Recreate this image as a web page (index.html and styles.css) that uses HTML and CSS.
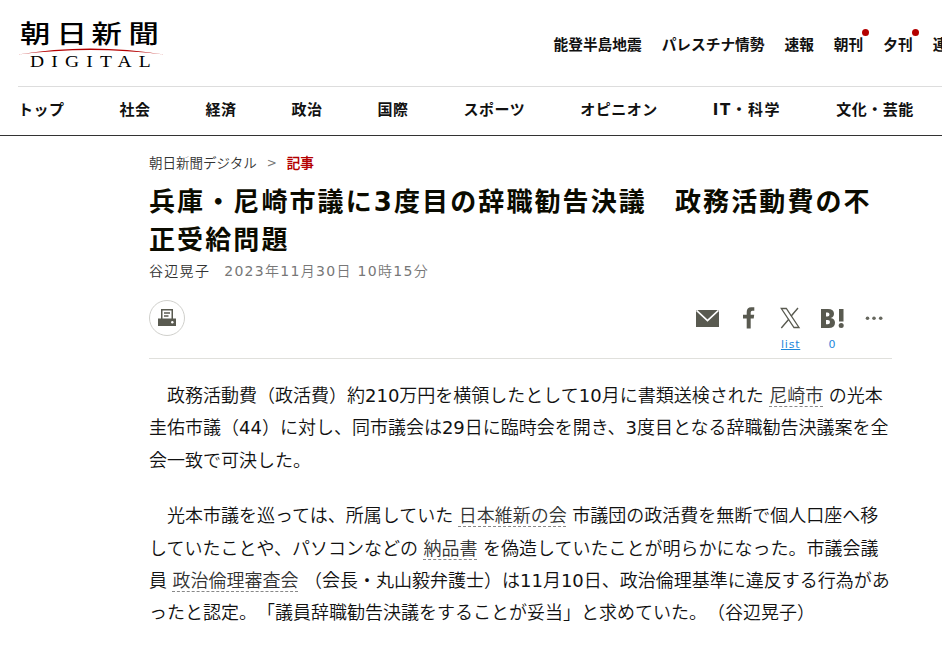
FILE: index.html
```html
<!DOCTYPE html>
<html lang="ja">
<head>
    <meta charset="UTF-8">
    <meta name="viewport" content="width=device-width, initial-scale=1.0">
    <title>兵庫・尼崎市議に3度目の辞職勧告決議　政務活動費の不正受給問題:朝日新聞デジタル</title>
    <link rel="stylesheet" href="styles.css">
</head>
<body>
    <header class="header">
        <div class="header-top">
            <a href="#" class="logo">
                <svg width="146" height="50" viewBox="0 0 146 50">
                    <g class="logo-name">
                        <text transform="translate(2 24) scale(1.24 1)">朝</text>
                        <text transform="translate(38.5 24) scale(1.24 1)">日</text>
                        <text transform="translate(73.5 24) scale(1.24 1)">新</text>
                        <text transform="translate(110.5 24) scale(1.24 1)">聞</text>
                    </g>
                    <path d="M0 35.5Q72 23.5 146 35.5Q72 26.5 0 35.5z" fill="#b40000"/>
                    <text class="logo-sub" transform="translate(12 48) scale(1.15 1)" textLength="105">DIGITAL</text>
                </svg>
            </a>
            <ul class="topics">
                <li><a href="#">能登半島地震</a></li>
                <li><a href="#">パレスチナ情勢</a></li>
                <li><a href="#">速報</a></li>
                <li class="new"><a href="#">朝刊</a></li>
                <li class="new"><a href="#">夕刊</a></li>
                <li><a href="#">連載</a></li>
            </ul>
        </div>
        <nav class="nav">
            <a href="#">トップ</a>
            <a href="#">社会</a>
            <a href="#">経済</a>
            <a href="#">政治</a>
            <a href="#">国際</a>
            <a href="#">スポーツ</a>
            <a href="#">オピニオン</a>
            <a href="#" class="wide">IT・科学</a>
            <a href="#">文化・芸能</a>
        </nav>
    </header>

    <main class="article">
        <div class="breadcrumb">
            <a href="#">朝日新聞デジタル</a>
            <span class="arrow">&gt;</span>
            <span class="current">記事</span>
        </div>
        <h1>兵庫・尼崎市議に3度目の辞職勧告決議　政務活動費の不正受給問題</h1>
        <p class="byline"><span class="author">谷辺晃子</span><time>2023年11月30日 10時15分</time></p>

        <div class="tools">
            <a href="#" class="print" aria-label="印刷">
                <svg width="18" height="18" viewBox="0 0 18 18">
                    <path d="M3 0h12v10H3z" fill="#595a50"/>
                    <path d="M4.5 1.5h9V10h-9z" fill="#fff"/>
                    <path d="M6 4h6M6 7h4.5" stroke="#595a50" stroke-width="1.3"/>
                    <path d="M0 9.5h18V17H0z" fill="#595a50"/>
                    <circle cx="14.3" cy="13.2" r="1.2" fill="#fff"/>
                </svg>
            </a>
            <ul class="share">
                <li>
                    <svg width="24" height="24" viewBox="0 0 24 24">
                        <path d="M1 4h23v17H1z" fill="#595a50"/>
                        <path d="M1.5 4.3L12.500 14.500 23.500 4.300" fill="none" stroke="#fff" stroke-width="1.7"/>
                    </svg>
                </li>
                <li>
                    <svg width="24" height="24" viewBox="0 0 24 24">
                        <path d="M9.7 22.500V12.500H6V8.800H9.700V6Q9.700 1.200 14.200 1.200H17.300V4.700H15.300Q13.700 4.700 13.700 6.500V8.800H17.200L16.700 12.500H13.700V22.500z" fill="#595a50"/>
                    </svg>
                </li>
                <li>
                    <svg width="24" height="24" viewBox="0 0 24 24">
                        <path d="M2.3 2.500H7.300L20 21.500H15z" fill="#fff" stroke="#595a50" stroke-width="1.3"/>
                        <path d="M19 2L12 10.300M9.800 13.300L2.300 22" fill="none" stroke="#595a50" stroke-width="1.4"/>
                    </svg>
                    <a href="#" class="list">list</a>
                </li>
                <li>
                    <svg width="24" height="24" viewBox="0 0 24 24">
                        <path fill-rule="evenodd" d="M1 3H8Q14 3 14 7.700Q14 11.200 10.500 12Q15 12.700 15 16.800Q15 22 8.500 22H1zM6 6.600V10.400H7.500Q9.500 10.400 9.500 8.500Q9.500 6.600 7.500 6.600zM6 14V18.300H7.800Q10 18.300 10 16.100Q10 14 7.800 14zM19 3H23.500V15.500H19z" fill="#595a50"/>
                        <circle cx="21.2" cy="19.500" r="2.500" fill="#595a50"/>
                    </svg>
                    <span class="count">0</span>
                </li>
                <li>
                    <svg width="24" height="24" viewBox="0 0 24 24" fill="#66675e">
                        <circle cx="5.5" cy="12.300" r="1.800"/>
                        <circle cx="12" cy="12.300" r="1.800"/>
                        <circle cx="18.7" cy="12.300" r="1.800"/>
                    </svg>
                </li>
            </ul>
        </div>

        <div class="text">
            <p>　政務活動費（政活費）約210万円を横領したとして10月に書類送検された<a href="#">尼崎市</a>の光本圭佑市議（44）に対し、同市議会は29日に臨時会を開き、3度目となる辞職勧告決議案を全会一致で可決した。</p>
            <p>　光本市議を巡っては、所属していた<a href="#">日本維新の会</a>市議団の政活費を無断で個人口座へ移していたことや、パソコンなどの<a href="#">納品書</a>を偽造していたことが明らかになった。市議会議員<a href="#">政治倫理審査会</a>（会長・丸山毅弁護士）は11月10日、政治倫理基準に違反する行為があったと認定。「議員辞職勧告決議をすることが妥当」と求めていた。（谷辺晃子）</p>
        </div>
    </main>
</body>
</html>
```

FILE: styles.css
```css
* {
    margin: 0;
    padding: 0;
    box-sizing: border-box;
}

body {
    font-family: "DejaVu Sans", "Noto Sans CJK JP", sans-serif;
    background: #fff;
    color: #111;
    overflow: hidden;
    text-spacing-trim: space-all;
}

a {
    color: inherit;
    text-decoration: none;
}

ul {
    list-style: none;
}

.header {
    border-bottom: 1px solid #333;
    height: 136px;
    overflow: hidden;
}

.header-top {
    display: flex;
    height: 87px;
    margin-left: 18px;
    border-bottom: 1px solid #ddd;
    padding-top: 19px;
}

.logo {
    width: 146px;
    flex-shrink: 0;
}

.logo svg {
    display: block;
    overflow: visible;
}

.logo-name {
    font-family: "Noto Sans CJK JP", sans-serif;
    font-size: 24.5px;
    font-weight: 500;
}

.logo-sub {
    font-family: "Liberation Serif", serif;
    font-size: 17px;
}

.topics {
    display: flex;
    gap: 20px;
    margin-left: 389.5px;
    padding-top: 15px;
    font-size: 14.7px;
    font-weight: bold;
    line-height: 22px;
    white-space: nowrap;
}

.topics .new {
    position: relative;
}

.topics .new::after {
    content: "";
    position: absolute;
    top: -5px;
    right: -6px;
    width: 7px;
    height: 7px;
    border-radius: 50%;
    background: #b40000;
}

.nav {
    display: flex;
    gap: 55px;
    padding: 11px 0 0 18px;
    font-size: 15px;
    font-weight: bold;
    letter-spacing: 0.5px;
    line-height: 24px;
    white-space: nowrap;
}

.nav .wide {
    letter-spacing: 1.5px;
}

.article {
    width: 743px;
    margin-left: 149px;
}

.breadcrumb {
    display: flex;
    gap: 10px;
    padding-top: 17px;
    font-family: "DejaVu Sans", "Noto Sans CJK JP DemiLight", "Noto Sans CJK JP", sans-serif;
    font-size: 13.5px;
    line-height: 20px;
    color: #333;
}

.breadcrumb .arrow {
    font-size: 12px;
    color: #777;
}

.breadcrumb .current {
    color: #b40000;
    font-weight: bold;
}

h1 {
    margin-top: 10px;
    font-size: 26px;
    letter-spacing: 2.1px;
    line-height: 38px;
    color: #0b0b00;
}

.byline {
    display: flex;
    gap: 14px;
    margin-top: 2px;
    font-family: "DejaVu Sans", "Noto Sans CJK JP DemiLight", "Noto Sans CJK JP", sans-serif;
    font-size: 14px;
    letter-spacing: 1.3px;
    line-height: 20px;
}

.byline .author {
    color: #333;
}

.byline time {
    color: #777;
}

.tools {
    display: flex;
    justify-content: space-between;
    height: 59px;
    margin-top: 19px;
    border-bottom: 1px solid #e0e0dc;
}

.print {
    display: flex;
    align-items: center;
    justify-content: center;
    width: 36px;
    height: 36px;
    border: 1px solid #d0d0cc;
    border-radius: 50%;
}

.share {
    display: flex;
    gap: 17.7px;
    padding: 6px 6px 0 0;
}

.share li {
    display: flex;
    flex-direction: column;
    align-items: center;
    gap: 7px;
    width: 24px;
}

.share .list,
.share .count {
    font-size: 11px;
    letter-spacing: 0.8px;
    line-height: 16px;
    color: #1d87dc;
}

.share .list {
    text-decoration: underline;
}

.text {
    padding-top: 21px;
    font-family: "DejaVu Sans", "Noto Sans CJK JP DemiLight", "Noto Sans CJK JP", sans-serif;
    font-size: 18px;
    line-height: 32.4px;
}

.text p {
    margin-bottom: 23px;
}

.text a {
    margin: 0 5.5px;
    color: #333;
    text-decoration: underline dashed #888 1px;
    text-underline-offset: 4px;
}
```
